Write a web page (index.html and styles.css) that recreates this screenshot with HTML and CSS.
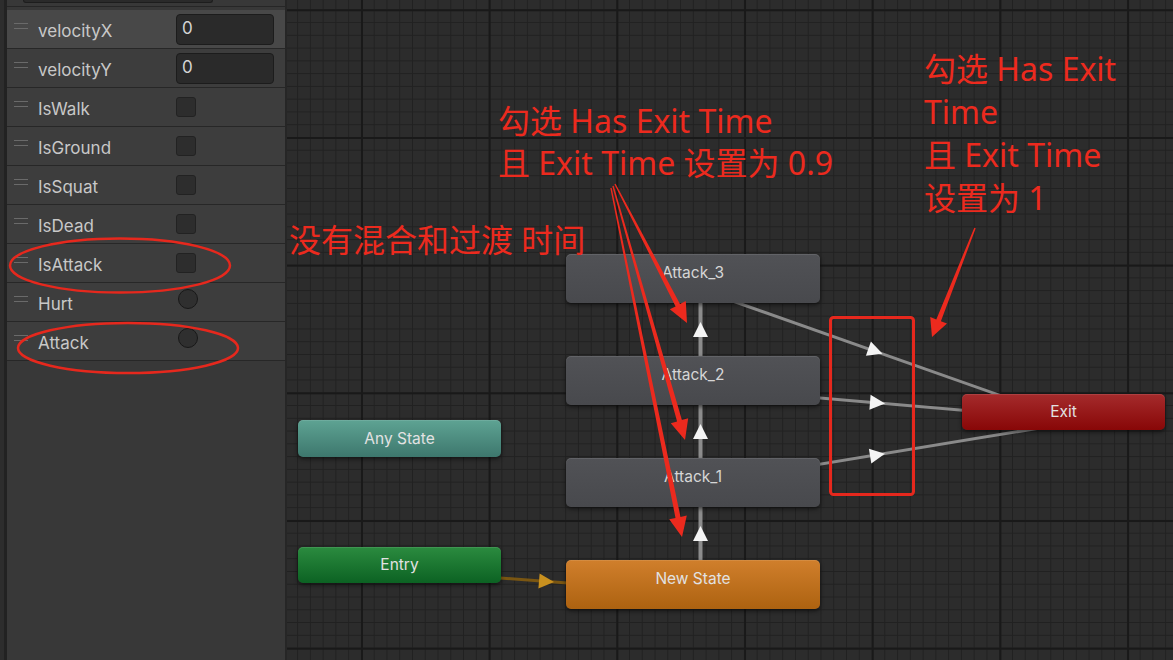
FILE: index.html
```html
<!DOCTYPE html>
<html lang="zh">
<head>
<meta charset="utf-8">
<title>Animator</title>
<link rel="stylesheet" href="styles.css">
</head>
<body>
<div class="app">
  <aside class="panel-frame">
    <div class="panel">
      <div class="panel-top"><div class="search"></div></div>
      <div class="params">
        <div class="param selected"><span class="handle"></span><span class="name">velocityX</span><span class="field">0</span></div>
        <div class="param"><span class="handle"></span><span class="name">velocityY</span><span class="field">0</span></div>
        <div class="param"><span class="handle"></span><span class="name">IsWalk</span><span class="check"></span></div>
        <div class="param"><span class="handle"></span><span class="name">IsGround</span><span class="check"></span></div>
        <div class="param"><span class="handle"></span><span class="name">IsSquat</span><span class="check"></span></div>
        <div class="param"><span class="handle"></span><span class="name">IsDead</span><span class="check"></span></div>
        <div class="param"><span class="handle"></span><span class="name">IsAttack</span><span class="check"></span></div>
        <div class="param"><span class="handle"></span><span class="name">Hurt</span><span class="trigger"></span></div>
        <div class="param"><span class="handle"></span><span class="name">Attack</span><span class="trigger"></span></div>
      </div>
    </div>
  </aside>

  <main class="graph">
    <svg class="edges" viewBox="287 0 886 660" width="886" height="660">
      <line x1="400" y1="570.3" x2="693" y2="592.6" stroke="#7a5612" stroke-width="3"/>
      <line x1="700.5" y1="278" x2="700.5" y2="584" stroke="#8c8c8c" stroke-width="4"/>
      <line x1="693" y1="287" x2="1064" y2="418" stroke="#8a8a8a" stroke-width="3"/>
      <line x1="693" y1="387" x2="1064" y2="419" stroke="#8a8a8a" stroke-width="3"/>
      <line x1="693" y1="485" x2="1064" y2="424" stroke="#8a8a8a" stroke-width="3"/>
      <g fill="#f4f4f4">
        <polygon points="700.5,322 708,337 693,337"/>
        <polygon points="700.5,424 708,439 693,439"/>
        <polygon points="700.5,526 708,541 693,541"/>
        <polygon points="882.5,353.7 865.9,355.8 870.9,341.6"/>
        <polygon points="885,403.6 869.4,409.8 870.6,394.8"/>
        <polygon points="884.9,453.7 871.3,463.5 868.9,448.7"/>
      </g>
      <polygon points="554,582.1 538.4,588.5 539.6,573.5" fill="#c8901f"/>
    </svg>

    <div class="node state n-attack3">Attack_3</div>
    <div class="node state n-attack2">Attack_2</div>
    <div class="node state n-attack1">Attack_1</div>
    <div class="node default n-new">New State</div>
    <div class="node any n-any">Any State</div>
    <div class="node entry n-entry">Entry</div>
    <div class="node exit n-exit">Exit</div>
  </main>

  <svg class="marks" viewBox="0 0 1173 660" width="1173" height="660">
    <g fill="none" stroke="#e6281d">
      <ellipse cx="120" cy="265.5" rx="110" ry="27" stroke-width="2.5"/>
      <ellipse cx="128" cy="348" rx="110" ry="25" stroke-width="2.5"/>
      <rect x="830.5" y="317.5" width="83" height="177" rx="3" stroke-width="3"/>
    </g>
    <g fill="#ec2a1e">
      <polygon points="614.4,184.3 675.6,306.4 669.8,309.3 687,323 685.8,301.1 680.0,304.0 615.6,183.7"/>
      <polygon points="612.3,186.2 677.1,421.5 670.8,423.3 685,440 688.2,418.3 681.9,420.1 613.7,185.8"/>
      <polygon points="610.3,188.1 675.5,517.9 669.2,519.2 682,537 686.8,515.6 680.5,516.9 611.7,187.9"/>
      <polygon points="974.3,227.7 936.3,319.4 930.2,317.0 932,337 947.0,323.6 940.9,321.2 975.7,228.3"/>
    </g>
  </svg>

  <div class="note note-mid">勾选 Has Exit Time<br>且 Exit Time 设置为 0.9</div>
  <div class="note note-left">没有混合和过渡 时间</div>
  <div class="note note-right">勾选 Has Exit<br>Time<br>且 Exit Time<br>设置为 1</div>
</div>
</body>
</html>
```

FILE: styles.css
```css
* { box-sizing: border-box; }

body {
  margin: 0;
  background: #2a2a2a;
}

.app {
  position: relative;
  display: flex;
  width: 1173px;
  height: 660px;
  overflow: hidden;
  font-family: Inter, "Noto Sans", sans-serif;
}

/* ---------- parameters panel ---------- */
.panel-frame {
  flex: none;
  width: 287px;
  display: flex;
  padding-left: 4px;
  background: #2d2d2d;
}

.panel {
  flex: 1;
  background: #383838;
  border-left: 3px solid #222222;
  border-right: 2px solid #262626;
}

.panel-top {
  height: 7px;
  border-bottom: 1px solid #262626;
  margin-bottom: 3px;
}

.search {
  margin-left: 16px;
  width: 190px;
  height: 3px;
  background: #2a2a2a;
  border: 1px solid #1d1d1d;
  border-top: none;
  border-radius: 0 0 3px 3px;
}

.params {
  display: flex;
  flex-direction: column;
}

.param {
  display: flex;
  align-items: flex-start;
  height: 39px;
  padding-left: 7px;
  background: #3d3d3d;
  border-bottom: 1px solid #272727;
}

.param.selected {
  background: #484848;
}

.handle {
  flex: none;
  width: 14px;
  height: 6px;
  margin-top: 13px;
  border-top: 1px solid #6a6a6a;
  border-bottom: 1px solid #6a6a6a;
}

.name {
  flex: none;
  width: 138px;
  margin-left: 10px;
  padding-top: 4px;
  font-size: 17px;
  line-height: 34px;
  color: #c8c8c8;
}

.field {
  flex: none;
  width: 98px;
  height: 31px;
  margin-top: 4px;
  padding-left: 5px;
  background: #2a2a2a;
  border: 1px solid #1c1c1c;
  border-radius: 4px;
  font-size: 17px;
  line-height: 26px;
  color: #d4d4d4;
}

.check {
  flex: none;
  width: 20px;
  height: 20px;
  margin-top: 9px;
  background: #2d2d2d;
  border: 1px solid #222222;
  border-radius: 3px;
}

.trigger {
  flex: none;
  width: 20px;
  height: 20px;
  margin-top: 6px;
  margin-left: 2px;
  background: #2f2f2f;
  border: 1px solid #181818;
  border-radius: 50%;
}

/* ---------- graph ---------- */
.graph {
  flex: 1;
  position: relative;
  background-color: #2c2c2c;
  background-image:
    linear-gradient(90deg, #191919 2px, transparent 2px),
    linear-gradient(180deg, #191919 2px, transparent 2px),
    linear-gradient(90deg, #212121 1px, transparent 1px),
    linear-gradient(180deg, #212121 1px, transparent 1px);
  background-size: 127.7px 100%, 100% 127.7px, 12.77px 100%, 100% 12.77px;
  background-position: 74px 0, 0 9.3px, 10.1px 0, 0 9.3px;
}

.edges {
  position: absolute;
  left: 0;
  top: 0;
}

.node {
  position: absolute;
  border-radius: 5px;
  box-shadow: 0 2px 4px rgba(0, 0, 0, 0.55), inset 0 1px 0 rgba(255, 255, 255, 0.1);
  color: #e2e2e2;
  font-size: 15.5px;
  line-height: 37px;
  text-align: center;
}

.state {
  width: 254px;
  height: 49px;
  left: 279px;
  background: linear-gradient(#515256, #48494d);
  color: #d6d6d6;
}

.n-attack3 { top: 254px; }
.n-attack2 { top: 356px; }
.n-attack1 { top: 458px; }

.default {
  width: 254px;
  height: 49px;
  left: 279px;
  top: 560px;
  background: linear-gradient(#d07f2c, #ad6210);
}

.any {
  width: 203px;
  height: 37px;
  left: 11px;
  top: 420px;
  background: linear-gradient(#5ea393, #3d776d);
}

.entry {
  width: 203px;
  height: 36px;
  left: 11px;
  top: 547px;
  line-height: 36px;
  background: linear-gradient(#2b8b3f, #0c6223);
}

.exit {
  width: 203px;
  height: 36px;
  left: 675px;
  top: 394px;
  line-height: 36px;
  background: linear-gradient(#a52b2c, #880707);
}

/* ---------- annotations ---------- */
.marks {
  position: absolute;
  left: 0;
  top: 0;
  pointer-events: none;
}

.note {
  position: absolute;
  color: #ec2a1e;
  font-family: "Noto Sans", "Noto Sans CJK SC", sans-serif;
  font-size: 32px;
  line-height: 42px;
  white-space: nowrap;
}

.note-mid { left: 498px; top: 100px; }
.note-left { left: 289px; top: 219px; }
.note-right { left: 924px; top: 47px; line-height: 43px; }
```
